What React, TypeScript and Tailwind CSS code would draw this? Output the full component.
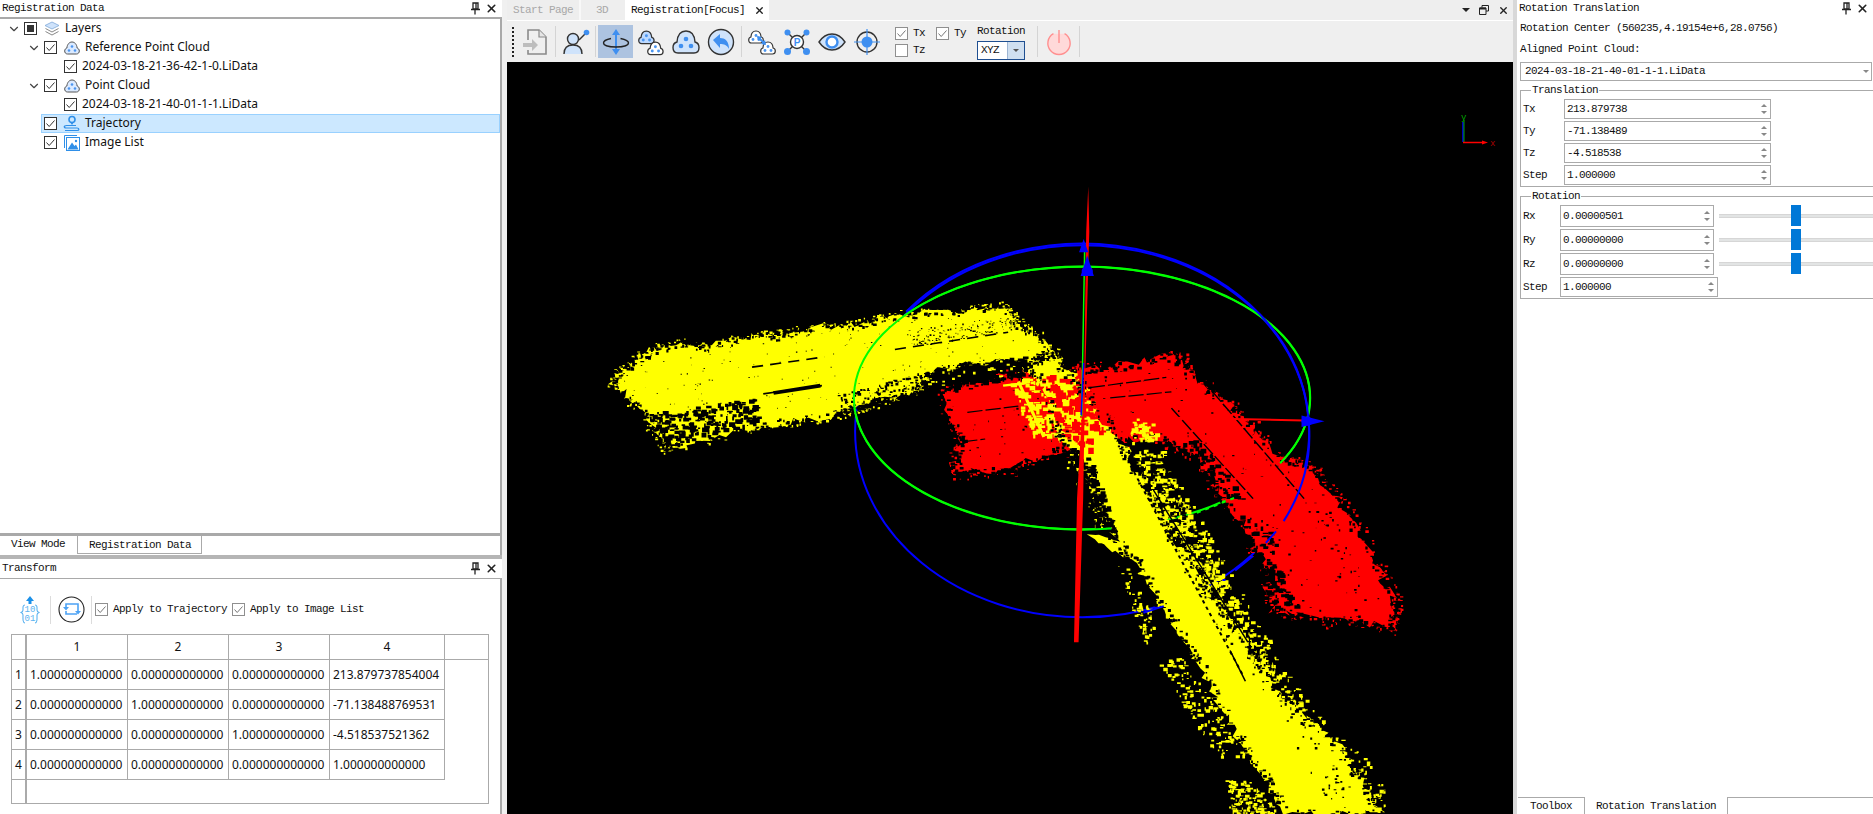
import React from 'react';
import { ChevronDown, X } from 'lucide-react';

const mono = "font-['Liberation_Mono',monospace] text-[11px] tracking-[-0.6px] text-[#111]";
const sans = "font-['Noto_Sans',sans-serif] text-[12px] text-[#111]";

// ---- point cloud generator (coords in zoomed space, 1568 x 1568 over 800 x 644)
type Pt = [number, number];

const rng = (seed: number) => () => {
  seed = (seed * 16807) % 2147483647;
  return (seed - 1) / 2147483646;
};

const inside = (p: Pt, poly: Pt[]) => {
  let c = false;
  for (let i = 0, j = poly.length - 1; i < poly.length; j = i++) {
    const [xi, yi] = poly[i];
    const [xj, yj] = poly[j];
    if (yi > p[1] !== yj > p[1] && p[0] < ((xj - xi) * (p[1] - yi)) / (yj - yi) + xi) c = !c;
  }
  return c;
};

const blob = (x: number, y: number, w: number, h: number) =>
  `M${x.toFixed(0)} ${y.toFixed(0)}h${w.toFixed(1)}v${h.toFixed(1)}h${(-w).toFixed(1)}z`;

const scatter = (seed: number, poly: Pt[], count: number, min: number, max: number) => {
  const r = rng(seed);
  const xs = poly.map((p) => p[0]);
  const ys = poly.map((p) => p[1]);
  const x0 = Math.min(...xs);
  const x1 = Math.max(...xs);
  const y0 = Math.min(...ys);
  const y1 = Math.max(...ys);
  let d = '';
  for (let i = 0; i < count; i++) {
    const x = x0 + r() * (x1 - x0);
    const y = y0 + r() * (y1 - y0);
    if (!inside([x, y], poly)) continue;
    d += blob(x, y, min + r() * (max - min), min + r() * (max - min));
  }
  return d;
};

// jagged outline, so the hull does not read as a polygon
const rough = (seed: number, poly: Pt[], amp: number, step = 14) => {
  const r = rng(seed);
  let d = '';
  poly.forEach((a, i) => {
    const b = poly[(i + 1) % poly.length];
    const n = Math.max(1, Math.round(Math.hypot(b[0] - a[0], b[1] - a[1]) / step));
    for (let k = 0; k < n; k++) {
      const t = k / n;
      const x = a[0] + (b[0] - a[0]) * t + (r() - 0.5) * amp;
      const y = a[1] + (b[1] - a[1]) * t + (r() - 0.5) * amp;
      d += `${d ? 'L' : 'M'}${x.toFixed(0)} ${y.toFixed(0)}`;
    }
  });
  return d + 'z';
};

// specks sprayed around the outline
const spray = (seed: number, poly: Pt[], count: number, dist: number, min: number, max: number) => {
  const r = rng(seed);
  let d = '';
  for (let i = 0; i < count; i++) {
    const k = Math.floor(r() * poly.length);
    const a = poly[k];
    const b = poly[(k + 1) % poly.length];
    const t = r();
    d += blob(
      a[0] + (b[0] - a[0]) * t + (r() - 0.5) * dist,
      a[1] + (b[1] - a[1]) * t + (r() - 0.5) * dist,
      min + r() * (max - min),
      min + r() * (max - min),
    );
  }
  return d;
};

const redMain: Pt[] = [[665, 535], [800, 500], [870, 490], [920, 480], [1000, 480], [1130, 450], [1160, 500], [1250, 590], [1340, 700], [1400, 730], [1440, 790], [1500, 900], [1558, 1045], [1555, 1120], [1490, 1095], [1420, 1100], [1320, 1070], [1300, 960], [1240, 830], [1170, 700], [1090, 650], [900, 680], [800, 730], [690, 740], [705, 660]];
const yellowArm: Pt[] = [[25, 518], [45, 485], [90, 445], [150, 420], [210, 430], [300, 405], [350, 402], [430, 382], [520, 372], [600, 350], [700, 345], [790, 330], [815, 372], [850, 395], [960, 550], [900, 560], [850, 490], [800, 462], [640, 490], [620, 540], [500, 580], [440, 600], [300, 625], [130, 680], [90, 600]];
const yellowRoad: Pt[] = [[850, 470], [880, 440], [960, 560], [1030, 680], [1080, 800], [1150, 950], [1235, 1100], [1325, 1270], [1450, 1400], [1530, 1568], [1340, 1568], [1300, 1480], [1240, 1370], [1165, 1190], [1100, 1060], [1050, 960], [1000, 880], [970, 800], [930, 720], [900, 640]];
const yellowPatch: Pt[] = [[960, 890], [1040, 905], [1060, 945], [1000, 930]];
const rightSparse: Pt[] = [[1040, 680], [1100, 680], [1170, 830], [1230, 970], [1290, 1100], [1350, 1230], [1410, 1330], [1510, 1440], [1545, 1530], [1540, 1568], [1430, 1568], [1320, 1300], [1200, 1100], [1100, 880]];
const rightDense: Pt[] = [[1050, 690], [1110, 730], [1170, 870], [1240, 1030], [1310, 1190], [1390, 1330], [1470, 1440], [1530, 1568], [1430, 1568], [1330, 1300], [1220, 1130], [1110, 880]];
const leftStripA: Pt[] = [[1015, 960], [1030, 960], [1090, 1100], [1070, 1160], [1040, 1060]];
const leftStripB: Pt[] = [[1090, 1200], [1140, 1180], [1200, 1300], [1270, 1420], [1220, 1440], [1150, 1320]];
const leftStripC: Pt[] = [[1225, 1480], [1280, 1490], [1330, 1568], [1235, 1568]];
const leftEdge: Pt[] = [[900, 690], [945, 720], [1000, 880], [970, 880], [950, 810]];

const holesArm: Pt[] = [[630, 490], [700, 475], [830, 452], [845, 480], [800, 505], [660, 530], [620, 545]];
const holesEnd: Pt[] = [[85, 590], [300, 555], [310, 610], [130, 672]];
const holesLow: Pt[] = [[460, 550], [630, 490], [640, 540], [480, 590]];
const holesCorner: Pt[] = [[590, 390], [810, 355], [830, 385], [620, 430]];
const holesRoadLeft: Pt[] = [[905, 660], [960, 700], [1010, 880], [960, 880], [930, 770]];
const redFlecks: Pt[] = [[800, 510], [920, 480], [960, 610], [900, 660], [840, 640]];
const redOverRoad: Pt[] = [[860, 490], [950, 520], [990, 620], [960, 680], [900, 640]];
const redHoles: Pt[] = [[1110, 650], [1180, 660], [1280, 830], [1240, 810]];
const redHolesB: Pt[] = [[1250, 830], [1310, 850], [1350, 1050], [1300, 1000]];
const redEdge: Pt[] = [[1380, 820], [1420, 800], [1500, 1000], [1480, 1080]];

const PointCloud = () => (
  <svg className="block w-full h-full" viewBox="0 0 1006 752">
    <g transform="translate(93 108) scale(0.5102 0.4107)">
      <ellipse cx="945" cy="636" rx="445" ry="453" fill="none" stroke="#0000ff" strokeWidth="2" vectorEffect="non-scaling-stroke" />
      <ellipse cx="945" cy="555" rx="447" ry="320" fill="none" stroke="#00ff00" strokeWidth="2" vectorEffect="non-scaling-stroke" />
      {/* red cloud */}
      <path d={rough(41, redMain, 22, 12)} fill="#ff0000" />
      <path d={spray(42, redMain, 700, 30, 2, 7)} fill="#ff0000" />
      <path d={spray(43, redMain, 500, 22, 3, 9)} fill="#000" />
      <path d={scatter(11, redHoles, 260, 3, 13)} fill="#000" />
      <path d={scatter(12, redHolesB, 200, 3, 11)} fill="#000" />
      <path d={scatter(13, redEdge, 80, 2, 6)} fill="#000" />
      <path d={scatter(14, redMain, 450, 1, 5)} fill="#000" />
      <path d="M1000 555L1120 540M960 530L1110 505M1120 580L1280 800M1180 510L1380 800M720 590L820 575M710 662L755 655" stroke="#000" strokeWidth="3" strokeDasharray="30 6" fill="none" />
      <path d={scatter(15, [[1290, 970], [1330, 960], [1370, 1060], [1310, 1060]], 60, 4, 14)} fill="#000" />
      {/* yellow cloud */}
      <path d={rough(51, yellowArm, 20, 11)} fill="#ffff00" />
      <path d={spray(52, yellowArm, 900, 26, 2, 6)} fill="#ffff00" />
      <path d={spray(53, yellowArm, 500, 20, 2, 8)} fill="#000" />
      <path d={rough(54, yellowRoad, 20, 11)} fill="#ffff00" />
      <path d={rough(55, yellowPatch, 12, 10)} fill="#ffff00" />
      <path d={scatter(21, rightSparse, 3200, 2, 10)} fill="#ffff00" />
      <path d={scatter(56, rightDense, 4200, 3, 12)} fill="#ffff00" />
      <path d={scatter(22, leftStripA, 200, 2, 8)} fill="#ffff00" />
      <path d={scatter(23, leftStripB, 420, 2, 9)} fill="#ffff00" />
      <path d={scatter(24, leftStripC, 200, 2, 8)} fill="#ffff00" />
      <path d={scatter(25, leftEdge, 180, 3, 10)} fill="#ffff00" />
      <path d={scatter(26, redFlecks, 300, 3, 13)} fill="#ffff00" />
      <path d="M820 515L870 650M790 525L830 520" stroke="#ffff00" strokeWidth="6" fill="none" />
      <path d={scatter(61, redOverRoad, 260, 3, 16)} fill="#ff0000" />
      <path d={scatter(27, [[1040, 600], [1090, 620], [1095, 650], [1040, 670]], 90, 3, 10)} fill="#ffff00" />
      <path d={spray(57, yellowRoad, 700, 24, 2, 8)} fill="#000" />
      {/* holes in the yellow */}
      <path d={scatter(31, holesArm, 340, 3, 14)} fill="#000" />
      <path d={scatter(58, holesArm, 60, 3, 8)} fill="#ffff00" />
      <path d={scatter(32, holesEnd, 420, 3, 12)} fill="#000" />
      <path d={scatter(33, holesLow, 260, 2, 7)} fill="#000" />
      <path d={scatter(34, holesCorner, 340, 1, 4)} fill="#000" />
      <path d={scatter(35, yellowArm, 420, 1, 3)} fill="#000" />
      <path d={scatter(59, holesRoadLeft, 520, 3, 11)} fill="#000" />
      <path d={scatter(36, [[1060, 690], [1100, 690], [1140, 800], [1200, 900], [1180, 960], [1110, 830]], 230, 2, 8)} fill="#000" />
      <path d={scatter(37, [[1270, 1100], [1350, 1230], [1420, 1430], [1340, 1300]], 200, 3, 8)} fill="#000" />
      <path d={scatter(60, rightSparse, 900, 2, 6)} fill="#000" />
      <path d="M298 480L440 455M320 545L435 525M578 437L800 395" stroke="#000" strokeWidth="4" strokeDasharray="22 14" fill="none" />
      <path d="M1040 720L1260 1230" stroke="#000" strokeWidth="4" strokeDasharray="8 9" fill="none" />
      <path d="M340 543L432 525" stroke="#000" strokeWidth="9" fill="none" />
      <path d="M1085 780L1270 1150M1235 1170L1265 1245" stroke="#000" strokeWidth="3" fill="none" />
      {/* gizmo drawn over the cloud */}
      <path d="M1002 873A447 320 0 1 1 1333 714" fill="none" stroke="#00ff00" strokeWidth="2" vectorEffect="non-scaling-stroke" />
      <path d="M1170 835L1250 795" fill="none" stroke="#00ff00" strokeWidth="2" vectorEffect="non-scaling-stroke" strokeDasharray="4 5" />
      <path d="M600 345A445 453 0 0 1 1388 600A445 453 0 0 1 1340 855" fill="none" stroke="#0000ff" strokeWidth="2" vectorEffect="non-scaling-stroke" />
      <path d="M1325 880L1305 908M1280 940L1245 975M1105 1062L1065 1078M1220 998h6" fill="none" stroke="#0000ff" strokeWidth="2" vectorEffect="non-scaling-stroke" />
      <path d="M957 40L959 150L951 500L947 800L938 1150L929 1150L935 800L949 500L953 150Z" fill="#ff0000" />
      <path d="M950 190L944 600" stroke="#00ff00" strokeWidth="1.5" vectorEffect="non-scaling-stroke" fill="none" />
      <path d="M948 470L943 597" stroke="#0000ff" strokeWidth="1.5" vectorEffect="non-scaling-stroke" fill="none" />
      <path d="M1000 600L1380 610" stroke="#ff0000" strokeWidth="2" vectorEffect="non-scaling-stroke" fill="none" />
      <path d="M955 208L968 258L942 258Z M948 168L957 200L939 200Z M1375 598L1420 612L1375 626Z" fill="#0000ff" />
      <circle cx="955" cy="246" r="11" fill="#0000ff" />
      <circle cx="1386" cy="612" r="11" fill="#0000ff" />
    </g>
    {/* view axes */}
    <path d="M956 80V60" stroke="#0000ff" strokeWidth="1.5" />
    <path d="M957 80V58" stroke="#00aa00" strokeWidth="1" />
    <path d="M956 80.5H976" stroke="#ff0000" strokeWidth="1.5" />
    <path d="M975 78.5L981 80.5L975 82.5Z" fill="#ff0000" />
    <text x="983" y="84" fontSize="9" fill="#aa0000" fontFamily="Liberation Mono">x</text>
    <text x="954" y="58" fontSize="9" fill="#00aa00" fontFamily="Liberation Mono">y</text>
  </svg>
);

// ---- small icons
const Pin = () => (
  <svg width="10" height="13" viewBox="0 0 10 13" className="shrink-0">
    <path d="M3 1h5v6H3zM6 1v6M1 7.5h9M5 8v4.5" stroke="#222" strokeWidth="1.3" fill="none" />
  </svg>
);

const CloseX = () => <X size={13} strokeWidth={3} className="text-[#222] shrink-0" />;

const TitleBar = ({ title, h = 'h-[17px]' }: { title: string; h?: string }) => (
  <div className={`${h} flex items-center justify-between pl-[2px] pr-[4px] bg-white shrink-0`}>
    <span className={mono}>{title}</span>
    <span className="flex items-center gap-[5px]">
      <Pin />
      <CloseX />
    </span>
  </div>
);

const Check = ({ soft }: { soft?: boolean }) => (
  <svg width="13" height="13" viewBox="0 0 13 13" className="shrink-0">
    <rect x="0.5" y="0.5" width="12" height="12" fill="#fff" stroke={soft ? '#8f8f8f' : '#333'} />
    <path d="M2.5 6.5L5.2 9.5L10.5 3.5" fill="none" stroke={soft ? '#777' : '#333'} strokeWidth="1" />
  </svg>
);

const PartCheck = () => (
  <svg width="13" height="13" viewBox="0 0 13 13" className="shrink-0">
    <rect x="0.5" y="0.5" width="12" height="12" fill="#fff" stroke="#333" />
    <rect x="3" y="3" width="7" height="7" fill="#333" />
  </svg>
);

const CloudIcon = () => (
  <svg width="16" height="14" viewBox="0 0 16 14" className="shrink-0">
    <path d="M3.5 13C1.5 13 .7 11.4.7 10c0-1.6 1-2.7 2.2-3C3.2 3.2 5.4 1 8 1s4.800 2.200 5.100 6c1.200.3 2.200 1.400 2.200 3 0 1.400-.8 3-2.800 3z" fill="#dbeaff" stroke="#555" strokeWidth="1" />
    <circle cx="8" cy="5.500" r="1.300" fill="#4b95f0" />
    <circle cx="5" cy="9.500" r="1.300" fill="#4b95f0" />
    <circle cx="11" cy="9.500" r="1.300" fill="#4b95f0" />
  </svg>
);

const LayersIcon = () => (
  <svg width="16" height="15" viewBox="0 0 16 15" className="shrink-0">
    <path d="M8 1L15 4.500L8 8L1 4.500Z" fill="#cfe3fb" stroke="#7fa8d8" strokeWidth=".8" />
    <path d="M1.500 7.500L8 11L14.500 7.500M1.500 10.500L8 14L14.500 10.500" fill="none" stroke="#888" strokeWidth="1" />
  </svg>
);

const TrajIcon = () => (
  <svg width="17" height="17" viewBox="0 0 17 17" className="shrink-0">
    <circle cx="9" cy="4.500" r="3" fill="none" stroke="#2f8fe8" strokeWidth="1.600" />
    <path d="M7 7L9 10L11 7Z" fill="#2f8fe8" />
    <path d="M13 10.500H3.500C.5 10.500.5 13 3.500 13H14C16.500 13 16.500 15.500 14 15.500H2" fill="none" stroke="#2f8fe8" strokeWidth="1.200" />
  </svg>
);

const ImageIcon = () => (
  <svg width="16" height="16" viewBox="0 0 16 16" className="shrink-0">
    <path d="M.5 13V.5H13" fill="none" stroke="#2f8fe8" />
    <rect x="2.500" y="2.500" width="13" height="13" fill="#fff" stroke="#2f8fe8" />
    <path d="M3.500 14.500L8 7.500L10.500 11L12 9.500L14.500 14.500Z" fill="#2f8fe8" />
    <circle cx="12" cy="6" r="1.200" fill="#2f8fe8" />
  </svg>
);

// ---- tree
const TreeRow = ({ indent, arrow, icon, box, label, selected }: { indent: number; arrow?: boolean; icon?: React.ReactNode; box: React.ReactNode; label: string; selected?: boolean }) => (
  <div className="h-[19px] flex items-center" style={{ paddingLeft: indent }}>
    <div className={selected ? 'flex items-center h-[19px] flex-1 -ml-[3px] pl-[3px] bg-[#cce8ff] border border-[#99d1ff]' : 'flex items-center h-[19px] flex-1'}>
      <span className="w-[20px] -ml-[20px] flex justify-center shrink-0">
        {arrow && <ChevronDown size={14} strokeWidth={2} className="text-[#444]" />}
      </span>
      <span className={selected ? '-ml-[1px]' : ''}>{box}</span>
      {icon ? <span className="ml-[6px] w-[17px] flex justify-center">{icon}</span> : null}
      <span className={`${sans} ml-[5px] -mt-[2px] whitespace-nowrap`}>{label}</span>
    </div>
  </div>
);

// ---- matrix table
const matrix = [
  ['1.000000000000', '0.000000000000', '0.000000000000', '213.879737854004'],
  ['0.000000000000', '1.000000000000', '0.000000000000', '-71.138488769531'],
  ['0.000000000000', '0.000000000000', '1.000000000000', '-4.518537521362'],
  ['0.000000000000', '0.000000000000', '0.000000000000', '1.000000000000'],
];

const MatrixTable = () => (
  <div className="mx-[11px] mt-[6px] w-[478px] h-[170px] border border-[#aaa] flex flex-col shrink-0">
    <div className="flex h-[25px] border-b border-[#aaa] shrink-0">
      <div className="w-[15px] border-r-2 border-[#aaa] shrink-0" />
      {[1, 2, 3].map((n) => (
        <div key={n} className={`${sans} w-[101px] border-r border-[#aaa] flex items-center justify-center shrink-0`}>{n}</div>
      ))}
      <div className={`${sans} w-[115px] border-r border-[#aaa] flex items-center justify-center shrink-0`}>4</div>
    </div>
    {matrix.map((row, i) => (
      <div key={i} className="flex h-[30px] shrink-0">
        <div className={`${sans} w-[15px] border-r-2 border-b border-[#aaa] flex items-center justify-center shrink-0`}>{i + 1}</div>
        {row.map((v, j) => (
          <div key={j} className={`${sans} ${j === 3 ? 'w-[115px]' : 'w-[101px]'} border-r border-b border-[#aaa] flex items-center pl-[3px] shrink-0 whitespace-nowrap`}>{v}</div>
        ))}
      </div>
    ))}
    <div className="flex-1 flex">
      <div className="w-[15px] border-r-2 border-[#aaa]" />
    </div>
  </div>
);

// ---- toolbar icons
const Ico = ({ children }: { children: React.ReactNode }) => (
  <svg width="28" height="28" viewBox="0 0 28 28">{children}</svg>
);

const ToolBtn = ({ active, children }: { active?: boolean; children: React.ReactNode }) => (
  <div className={`w-[35px] h-[33px] flex items-center justify-center shrink-0 ${active ? 'bg-[#adc3e0]' : ''}`}>{children}</div>
);

const Sep = ({ w }: { w: string }) => (
  <div className={`${w} h-[31px] flex justify-center shrink-0`}>
    <div className="w-px h-full bg-[#d4d4d4]" />
  </div>
);

const Cloudlet = ({ x, y, s, fill = '#fff' }: { x: number; y: number; s: number; fill?: string }) => (
  <g transform={`translate(${x} ${y}) scale(${s})`}>
    <path d="M3.500 13C1.500 13 .7 11.400 .7 10c0-1.600 1-2.700 2.200-3C3.200 3.200 5.400 1 8 1s4.800 2.200 5.100 6c1.200.3 2.200 1.400 2.200 3 0 1.400-.8 3-2.800 3z" fill={fill} stroke="#333" strokeWidth="1.200" />
    <circle cx="8" cy="5.500" r="1.400" fill="#4b95f0" />
    <circle cx="5" cy="9.500" r="1.400" fill="#4b95f0" />
    <circle cx="11" cy="9.500" r="1.400" fill="#4b95f0" />
  </g>
);

const Toolbar = () => (
  <div className="h-[41px] bg-[#efefef] flex items-center pl-[5px] shrink-0">
    <div className="w-[2px] h-[30px] border-l-2 border-dotted border-[#222] shrink-0" />
    <div className="w-[4px] shrink-0" />
    <ToolBtn>
      <Ico>
        <path d="M6 12V2h11l7 7v17H6v-4" fill="none" stroke="#8a8a8a" strokeWidth="1.600" />
        <path d="M17 2v7h7" fill="#e5e5e5" stroke="#8a8a8a" strokeWidth="1.200" />
        <path d="M1 15h9v-4l6 6-6 6v-4H1z" fill="#bdbdbd" />
      </Ico>
    </ToolBtn>
    <Sep w="w-[5px]" />
    <ToolBtn>
      <Ico>
        <circle cx="11" cy="11" r="5.500" fill="#cfe3fb" stroke="#333" strokeWidth="1.400" />
        <path d="M2 26c0-7 4-9 9-9s9 2 9 9" fill="#cfe3fb" stroke="#333" strokeWidth="1.400" />
        <path d="M17 12L24 5" stroke="#333" strokeWidth="1.400" />
        <circle cx="24.500" cy="4.500" r="2.800" fill="#3f8ff0" />
      </Ico>
    </ToolBtn>
    <Sep w="w-[5px]" />
    <ToolBtn active>
      <Ico>
        <path d="M14 1L10 7h8zM14 27l-4-6h8z" fill="#3f8ff0" />
        <path d="M14 6v16" stroke="#3f8ff0" strokeWidth="2" />
        <path d="M9 10.500C4 11.500 1.500 13 1.500 15c0 2.500 5.500 4 12.500 4s12.500-1.500 12.500-4c0-2-3-3.500-8-4.500" fill="none" stroke="#222" strokeWidth="1.400" />
      </Ico>
    </ToolBtn>
    <ToolBtn>
      <Ico>
        <Cloudlet x={1} y={2} s={1.050} fill="#bcd9ff" />
        <Cloudlet x={10} y={13} s={1.050} />
      </Ico>
    </ToolBtn>
    <ToolBtn>
      <Ico>
        <path d="M6 25C2 25 1 22 1 19.500c0-3 2-5 4-5.500C5.500 7 9 3 14 3s8.500 4 9 11c2 .5 4 2.500 4 5.500 0 2.500-1 5.500-5 5.500z" fill="#cfe3fb" stroke="#333" strokeWidth="1.400" />
        <circle cx="14" cy="11" r="2.300" fill="#3f8ff0" />
        <circle cx="9" cy="18" r="2.300" fill="#3f8ff0" />
        <circle cx="19" cy="18" r="2.300" fill="#3f8ff0" />
      </Ico>
    </ToolBtn>
    <ToolBtn>
      <Ico>
        <circle cx="14" cy="14" r="12.500" fill="#cfe3fb" stroke="#333" strokeWidth="1.400" />
        <path d="M6 12l7-6v4c5 0 9 3 9 11-2-4-5-5-9-5v4z" fill="#3f8ff0" />
      </Ico>
    </ToolBtn>
    <Sep w="w-[6px]" />
    <ToolBtn>
      <Ico>
        <Cloudlet x={0} y={2} s={1} />
        <Cloudlet x={12} y={13} s={1} fill="#fff" />
        <path d="M10 9l7 7" stroke="#3f8ff0" strokeWidth="2" />
        <path d="M9 8l5 1-4 4zM18 17l-5-1 4-4z" fill="#3f8ff0" />
      </Ico>
    </ToolBtn>
    <ToolBtn>
      <Ico>
        <path d="M5 5l18 18M23 5L5 23" stroke="#333" strokeWidth="1.400" />
        <circle cx="14" cy="14" r="6.500" fill="#fff" stroke="#333" strokeWidth="1.400" />
        <text x="14" y="17.500" textAnchor="middle" fontSize="10" fontWeight="700" fontFamily="Liberation Sans" fill="#3f8ff0">P</text>
        <circle cx="4.500" cy="4.500" r="3" fill="#3f8ff0" />
        <circle cx="23.500" cy="4.500" r="3" fill="#3f8ff0" />
        <circle cx="4.500" cy="23.500" r="3.500" fill="#3f8ff0" />
        <circle cx="23.500" cy="23.500" r="3.500" fill="#3f8ff0" />
      </Ico>
    </ToolBtn>
    <ToolBtn>
      <Ico>
        <path d="M1 14C5 8 9 6 14 6s9 2 13 8c-4 6-8 8-13 8S5 20 1 14z" fill="#cfe3fb" stroke="#333" strokeWidth="1.400" />
        <circle cx="14" cy="14" r="5.500" fill="#fff" stroke="#3f8ff0" strokeWidth="2.400" />
      </Ico>
    </ToolBtn>
    <ToolBtn>
      <Ico>
        <circle cx="14" cy="14" r="10" fill="none" stroke="#333" strokeWidth="1.400" />
        <circle cx="14" cy="14" r="5.500" fill="#3f8ff0" />
        <path d="M14 1v26M1 14h26" stroke="#3f8ff0" strokeWidth="1.200" />
      </Ico>
    </ToolBtn>
    <div className="ml-[11px] w-[82px] flex flex-col gap-[6px] shrink-0">
      <div className="flex items-center h-[11px]">
        <Check soft />
        <span className={`${mono} ml-[5px] w-[23px]`}>Tx</span>
        <Check soft />
        <span className={`${mono} ml-[5px]`}>Ty</span>
      </div>
      <div className="flex items-center h-[11px]">
        <div className="w-[13px] h-[13px] bg-white border border-[#8f8f8f]" />
        <span className={`${mono} ml-[5px]`}>Tz</span>
      </div>
    </div>
    <div className="w-[48px] flex flex-col items-start gap-[1px] shrink-0">
      <span className={mono}>Rotation</span>
      <div className="w-[48px] h-[19px] border border-[#1f4f91] bg-white flex">
        <span className={`${mono} flex-1 pl-[3px] leading-[17px]`}>XYZ</span>
        <span className="w-[17px] bg-[#cfdff0] border-l border-[#9db5d3] flex items-center justify-center">
          <span className="w-0 h-0 border-x-[3px] border-x-transparent border-t-[3px] border-t-[#555]" />
        </span>
      </div>
    </div>
    <div className="ml-[12px] w-px h-[31px] bg-[#d4d4d4] shrink-0" />
    <div className="ml-[8px] w-[26px] flex justify-center shrink-0">
      <svg width="28" height="28" viewBox="0 0 28 28">
        <path d="M8 5a12 12 0 1 0 12 0" fill="#ffd9d9" stroke="#ff8f8f" strokeWidth="1.500" />
        <path d="M14 1v14" stroke="#ff8f8f" strokeWidth="1.500" />
      </svg>
    </div>
    <div className="ml-[7px] w-px h-[31px] bg-[#d4d4d4] shrink-0" />
  </div>
);

// ---- right panel
const SpinArrows = () => (
  <span className="flex flex-col gap-[4px] items-center w-[9px] shrink-0">
    <span className="w-0 h-0 border-x-[3px] border-x-transparent border-b-[3px] border-b-[#888]" />
    <span className="w-0 h-0 border-x-[3px] border-x-transparent border-t-[3px] border-t-[#888]" />
  </span>
);

const Spin = ({ value, w, h }: { value: string; w: string; h: string }) => (
  <div className={`${w} ${h} border border-[#aaa] bg-white flex items-center pl-[2px] pr-[2px] shrink-0`}>
    <span className={`${mono} flex-1`}>{value}</span>
    <SpinArrows />
  </div>
);

const Group = ({ title, h, children }: { title: string; h: string; children: React.ReactNode }) => (
  <div className={`${h} border border-[#aaa] border-r-0 relative`}>
    <span className={`${mono} absolute -top-[7px] left-[10px] bg-white px-[1px] leading-[13px]`}>{title}</span>
    {children}
  </div>
);

const Slider = () => (
  <div className="flex-1 h-[22px] flex items-center relative ml-[5px]">
    <div className="w-full h-[4px] bg-[#e2e4e4] border-y border-[#d6d6d6]" />
    <div className="absolute left-[72px] top-0 w-[10px] h-[21px] bg-[#0078d7]" />
  </div>
);

const RightPanel = () => (
  <div className="w-[356px] shrink-0 bg-white h-full flex flex-col overflow-hidden">
    <TitleBar title="Rotation Translation" />
    <div className="flex-1 flex flex-col pl-[3px]">
      <div className={`${mono} leading-[13px] mt-[5px]`}>Rotation Center (560235,4.19154e+6,28.0756)</div>
      <div className={`${mono} leading-[13px] mt-[8px]`}>Aligned Point Cloud:</div>
      <div className="mt-[6px] h-[19px] border border-[#aaa] mr-[1px] flex items-center pl-[4px] pr-[2px]">
        <span className={`${mono} flex-1`}>2024-03-18-21-40-01-1-1.LiData</span>
        <span className="w-0 h-0 border-x-[3px] border-x-transparent border-t-[3px] border-t-[#888]" />
      </div>
      <div className="mt-[9px]">
        <Group title="Translation" h="h-[97px]">
          <div className="flex flex-col gap-[2px] pt-[8px]">
            {[['Tx', '213.879738'], ['Ty', '-71.138489'], ['Tz', '-4.518538'], ['Step', '1.000000']].map(([l, v]) => (
              <div key={l} className="flex items-center pl-[2px] h-[20px]">
                <span className={`${mono} w-[41px]`}>{l}</span>
                <Spin value={v} w="w-[207px]" h="h-[20px]" />
              </div>
            ))}
          </div>
        </Group>
      </div>
      <div className="mt-[9px]">
        <Group title="Rotation" h="h-[103px]">
          <div className="flex flex-col gap-[2px] pt-[8px]">
            {[['Rx', '0.00000501'], ['Ry', '0.00000000'], ['Rz', '0.00000000']].map(([l, v]) => (
              <div key={l} className="flex items-center pl-[2px] h-[22px]">
                <span className={`${mono} w-[37px]`}>{l}</span>
                <Spin value={v} w="w-[154px]" h="h-[22px]" />
                <Slider />
              </div>
            ))}
            <div className="flex items-center pl-[2px] h-[20px]">
              <span className={`${mono} w-[37px]`}>Step</span>
              <Spin value="1.000000" w="w-[158px]" h="h-[20px]" />
            </div>
          </div>
        </Group>
      </div>
    </div>
    <div className="h-[17px] flex shrink-0">
      <div className="w-px" />
      <div className={`${mono} w-[67px] border-t border-r border-[#aaa] pl-[12px] leading-[16px]`}>Toolbox</div>
      <div className={`${mono} w-[142px] pl-[11px] leading-[19px]`}>Rotation Translation</div>
      <div className="flex-1 border-t border-l border-[#aaa]" />
    </div>
  </div>
);

const TabStrip = () => (
  <div className="h-[20px] bg-[#eeeeee] flex items-stretch border-b border-white box-content shrink-0">
    <div className="w-[74px] pl-[6px] flex items-center border-r-2 border-[#f8f8f8]">
      <span className={`${mono} !text-[#a8a8a8]`}>Start Page</span>
    </div>
    <div className="w-[44px] pl-[15px] flex items-center">
      <span className={`${mono} !text-[#a8a8a8]`}>3D</span>
    </div>
    <div className="w-[144px] bg-white pl-[6px] flex items-center">
      <span className={mono}>Registration[Focus]</span>
      <X size={11} strokeWidth={3} className="ml-[9px] text-[#222]" />
    </div>
    <div className="flex-1 flex items-center justify-end pr-[4px] gap-[9px]">
      <span className="w-0 h-0 border-x-[4px] border-x-transparent border-t-[4px] border-t-[#222]" />
      <svg width="10" height="10" viewBox="0 0 10 10">
        <path d="M3 2.500V.5h6.500V6H7M.5 3h6.500v6.500H.5z" fill="none" stroke="#222" strokeWidth="1" />
        <path d="M.5 3.500H7" stroke="#222" strokeWidth="2" />
      </svg>
      <X size={11} strokeWidth={3} className="text-[#222]" />
    </div>
  </div>
);

export default function App() {
  return (
    <div className="w-[1873px] h-[814px] flex overflow-hidden bg-[#f0f0f0]">
      {/* left column */}
      <div className="w-[502px] shrink-0 flex flex-col bg-white">
        <TitleBar title="Registration Data" />
        <div className="h-[519px] border-t-2 border-b-3 border-r-2 border-[#a9a9a9] bg-white shrink-0">
          <TreeRow indent={24} arrow box={<PartCheck />} icon={<LayersIcon />} label="Layers" />
          <TreeRow indent={44} arrow box={<Check />} icon={<CloudIcon />} label="Reference Point Cloud" />
          <TreeRow indent={64} box={<Check />} label="2024-03-18-21-36-42-1-0.LiData" />
          <TreeRow indent={44} arrow box={<Check />} icon={<CloudIcon />} label="Point Cloud" />
          <TreeRow indent={64} box={<Check />} label="2024-03-18-21-40-01-1-1.LiData" />
          <TreeRow indent={44} box={<Check />} icon={<TrajIcon />} label="Trajectory" selected />
          <TreeRow indent={44} box={<Check />} icon={<ImageIcon />} label="Image List" />
        </div>
        <div className="h-[19px] flex shrink-0 border-r-2 border-[#a9a9a9]">
          <div className={`${mono} w-[77px] pl-[11px] leading-[16px]`}>View Mode</div>
          <div className={`${mono} w-[125px] pl-[11px] border-l border-r border-b border-[#aaa] leading-[18px] h-[18px]`}>Registration Data</div>
          <div className="flex-1" />
        </div>
        <div className="h-[4px] bg-[#b5b5b5] shrink-0" />
        <TitleBar title="Transform" h="h-[19px]" />
        <div className="flex-1 border-t border-r-2 border-[#a9a9a9] flex flex-col">
          <div className="h-[37px] mt-[12px] flex items-center pl-[19px] shrink-0">
            <svg width="22" height="28" viewBox="0 0 22 28" className="shrink-0">
              <path d="M11 0L7 5h2.500v3h3V5H15z" fill="#1b90e8" />
              <path d="M6 9C3.500 9 4 12 4 14c0 2-.5 2-2.500 2.500C3.500 17 4 17 4 19c0 3-.5 8 2 8M16 9c2.500 0 2 3 2 5 0 2 .5 2 2.500 2.500-2 .5-2.500.5-2.500 2.500 0 3 .5 8-2 8" fill="none" stroke="#5cb3f0" strokeWidth="1.100" />
              <text x="11" y="16" textAnchor="middle" fontSize="9" fill="#5cb3f0" fontFamily="Liberation Mono">10</text>
              <text x="11" y="25" textAnchor="middle" fontSize="9" fill="#5cb3f0" fontFamily="Liberation Mono">01</text>
            </svg>
            <div className="ml-[9px] w-px h-[28px] bg-[#dcdcdc]" />
            <svg width="27" height="27" viewBox="0 0 27 27" className="ml-[7px] shrink-0">
              <circle cx="13.500" cy="13.500" r="12.500" fill="#fff" stroke="#222" strokeWidth="1.100" />
              <path d="M8 12V8h12v7M19 18H8v-3" fill="none" stroke="#4da3f5" strokeWidth="1.600" />
              <path d="M5 11h6l-3 3.500zM17 15h6l-3 3.500z" fill="#4da3f5" />
            </svg>
            <div className="ml-[6px] w-px h-[28px] bg-[#dcdcdc]" />
            <span className="ml-[3px]"><Check soft /></span>
            <span className={`${mono} ml-[5px] w-[119px] shrink-0`}>Apply to Trajectory</span>
            <Check soft />
            <span className={`${mono} ml-[5px]`}>Apply to Image List</span>
          </div>
          <MatrixTable />
        </div>
      </div>
      {/* splitter */}
      <div className="w-[5px] shrink-0 bg-[#f0f0f0]" />
      {/* center */}
      <div className="w-[1006px] shrink-0 flex flex-col">
        <TabStrip />
        <Toolbar />
        <div className="flex-1 bg-black min-h-0">
          <PointCloud />
        </div>
      </div>
      {/* splitter */}
      <div className="w-[4px] shrink-0 bg-[#d8d8d8]" />
      <RightPanel />
    </div>
  );
}
